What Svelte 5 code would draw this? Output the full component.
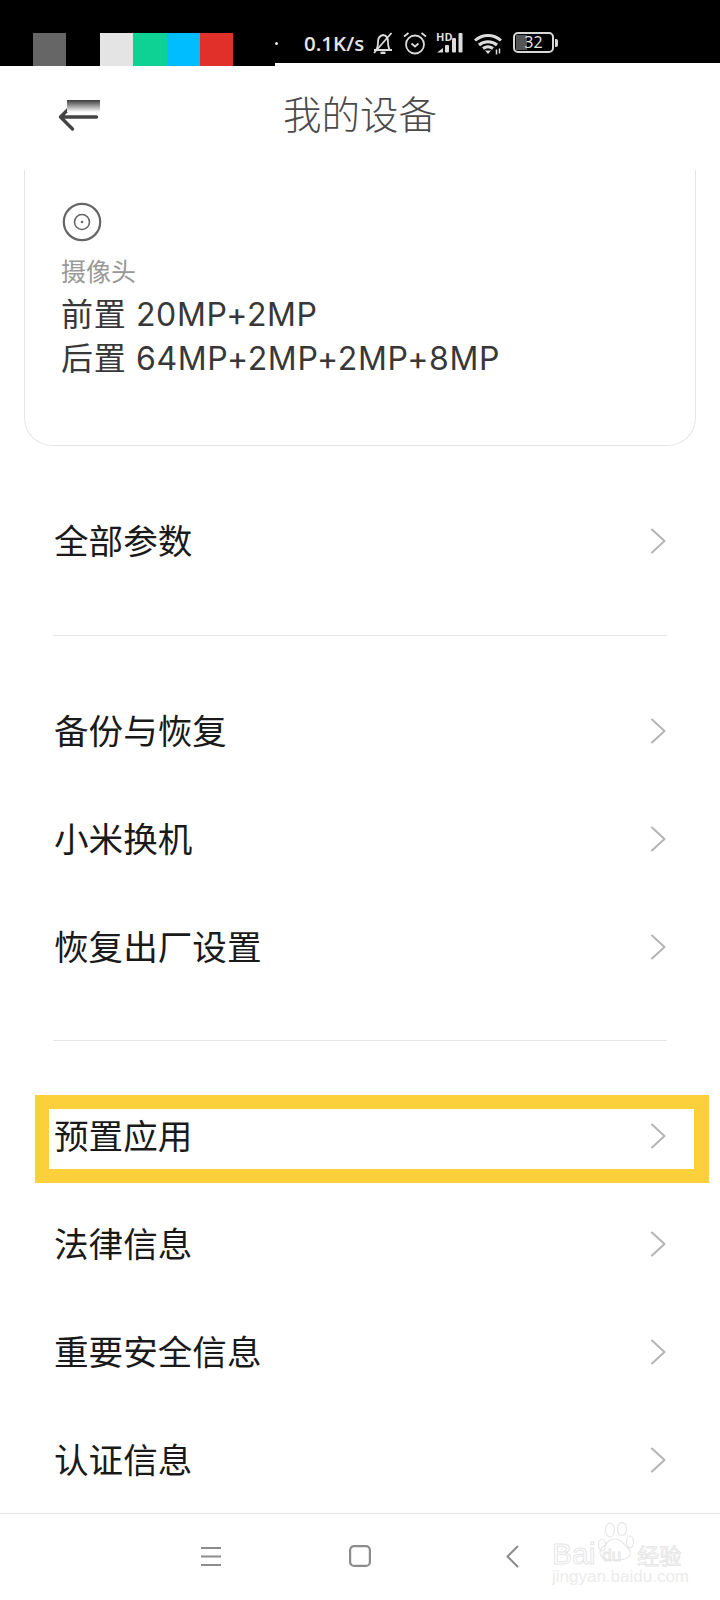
<script>
	const SWATCHES = ['#666666', '#000000', '#e4e4e4', '#0dd293', '#00bdff', '#e1302a'];
	const GROUPS = [
		[{ label: '全部参数' }],
		[{ label: '备份与恢复' }, { label: '小米换机' }, { label: '恢复出厂设置' }],
		[{ label: '预置应用', marked: true }, { label: '法律信息' }, { label: '重要安全信息' }, { label: '认证信息' }]
	];
</script>

<div class="page">
	<!-- Status bar -->
	<div class="status-bar">
		<div class="notif-area">
			{#each SWATCHES as color}
				<span class="swatch" style="background: {color}"></span>
			{/each}
		</div>
		<span class="dot"></span>
		<span class="speed">0.1K/s</span>
		<svg class="st bell" viewBox="0 0 20 22" fill="none" stroke="#dcdcdc" stroke-width="1.800">
			<path d="M1 18h18M3 18c2-2.500 2-5 2-8 0-4 2.200-6.500 5-7 3 .3 5 3 5 7 0 3 0 5.500 2 8"></path>
			<path d="M7.500 20.800h5" stroke-width="2.400"></path>
			<path d="M1 21 18.500 1"></path>
		</svg>
		<svg class="st alarm" viewBox="0 0 24 24" fill="none" stroke="#dcdcdc" stroke-width="1.800">
			<circle cx="12" cy="13.500" r="9"></circle>
			<path d="M8.500 12.500 12 15.500l3.500-3M1 5.500 5.500 2M23 5.500 18.500 2"></path>
		</svg>
		<svg class="st signal" viewBox="0 0 27 21">
			<text x="0" y="8.500" class="hd">HD</text>
			<g fill="#dcdcdc">
				<path d="M1 20.500 7 16v4.500z"></path>
				<rect x="9" y="13" width="4" height="7.500" rx="1"></rect>
				<rect x="16" y="6" width="4" height="14.500" rx="1"></rect>
				<rect x="22.500" y="1" width="4" height="19.500" rx="1"></rect>
			</g>
		</svg>
		<svg class="st wifi" viewBox="0 0 28 22" fill="none" stroke="#dcdcdc" stroke-width="3">
			<path d="M1 7.500c7.500-6.800 18.500-6.800 26 0M5 12c5-4.400 13-4.400 18 0M9 15.500c3-2.200 7-2.200 10 0"></path>
			<path d="M11 17.500h6L14 21z" fill="#dcdcdc" stroke="none"></path>
			<path d="M22.500 16.500v5M25.500 15.500v5" stroke-width="1.500"></path>
		</svg>
		<div class="battery">
			<div class="battery-body">
				<span class="battery-fill"></span>
				<span class="battery-num">32</span>
			</div>
			<span class="battery-tip"></span>
		</div>
	</div>

	<!-- Header -->
	<div class="header">
		<div class="back">
			<svg viewBox="0 0 42 32" fill="none" stroke="#444444" stroke-width="3.400" stroke-linecap="round" stroke-linejoin="round">
				<path d="M2.500 17h36M14.500 5 2.500 17l12 12"></path>
			</svg>
			<span class="back-fade"></span>
		</div>
		<div class="title">我的设备</div>
	</div>

	<!-- Spec card -->
	<div class="card">
		<svg class="camera-icon" viewBox="0 0 40 40" fill="none" stroke="#666666">
			<circle cx="20" cy="20" r="18.200" stroke-width="2.200"></circle>
			<circle cx="20" cy="20" r="7.500" stroke-width="1.600"></circle>
			<circle cx="20" cy="20" r="1.300" fill="#666666" stroke="none"></circle>
		</svg>
		<div class="spec-label">摄像头</div>
		<div class="spec-value">前置 20MP+2MP</div>
		<div class="spec-value">后置 64MP+2MP+2MP+8MP</div>
	</div>

	<!-- Menu groups -->
	{#each GROUPS as group, i}
		{#if i > 0}
			<div class="divider"></div>
		{/if}
		<div class="group">
			{#each group as row}
				<div class="row" class:marked={row.marked}>
					<span class="row-label">{row.label}</span>
					<svg class="chevron" viewBox="0 0 16 26" fill="none" stroke="#b4b4b4" stroke-width="2" stroke-linecap="round" stroke-linejoin="round">
						<path d="M2 1.500 14.500 13 2 24.500"></path>
					</svg>
				</div>
			{/each}
		</div>
	{/each}

	<!-- Navigation bar -->
	<div class="nav">
		<svg class="nav-menu" viewBox="0 0 20 20" fill="none" stroke="#8c8c8c" stroke-width="2">
			<path d="M0 2h20M0 10.500h20M0 19h20"></path>
		</svg>
		<svg class="nav-home" viewBox="0 0 22 22" fill="none" stroke="#8c8c8c" stroke-width="2.200">
			<rect x="1.100" y="1.100" width="19.800" height="19.800" rx="4"></rect>
		</svg>
		<svg class="nav-back" viewBox="0 0 13 23" fill="none" stroke="#8c8c8c" stroke-width="2" stroke-linecap="round" stroke-linejoin="round">
			<path d="M11.500 1.500 1.500 11.500l10 10"></path>
		</svg>
		<div class="watermark">
			<svg class="paw" viewBox="0 0 38 40" fill="none" stroke="#e6e6e6" stroke-width="1.200">
				<ellipse cx="5" cy="23" rx="3.500" ry="6"></ellipse>
				<ellipse cx="13" cy="8" rx="4.500" ry="7"></ellipse>
				<ellipse cx="25" cy="7" rx="4.500" ry="6.500"></ellipse>
				<ellipse cx="33" cy="20" rx="3.500" ry="6"></ellipse>
				<path d="M9 37c-7-2-8-9-2-13 4-3 4-7 11-7s8 5 12 8c5 4 4 10-2 12-6 1.500-13 1.500-19 0z"></path>
			</svg>
			<div class="wm-main"><span>Bai</span><span class="wm-du">du</span><span class="wm-cn">经验</span></div>
			<div class="wm-url">jingyan.baidu.com</div>
		</div>
	</div>
</div>

<style>
	:global(body) {
		background: #ffffff;
	}

	.page {
		width: 720px;
		height: 1600px;
		overflow: hidden;
		font-family: Inter, 'Noto Sans CJK SC', sans-serif;
	}

	/* ── Status bar ── */
	.status-bar {
		height: 63px;
		background: #000000;
		display: flex;
		align-items: flex-start;
		position: relative;
	}

	.notif-area {
		width: 242px;
		height: 33px;
		flex-shrink: 0;
		padding: 33px 0 0 33px;
		background: #000000;
		display: flex;
	}

	.swatch {
		width: 33.4px;
		height: 33px;
	}

	.dot {
		width: 3px;
		height: 3px;
		margin: 42px 0 0 0;
		background: #e8e8e8;
		border-radius: 50%;
	}

	.speed {
		margin: 28px 0 0 26px;
		width: 69px;
		font: 600 20.5px/30px 'Open Sans', sans-serif;
		color: #e4e4e4;
		white-space: nowrap;
	}

	.st {
		flex-shrink: 0;
		overflow: visible;
	}

	.bell {
		width: 20px;
		height: 22px;
		margin-top: 32px;
	}

	.alarm {
		width: 24px;
		height: 24px;
		margin: 31px 0 0 10px;
	}

	.signal {
		width: 27px;
		height: 21px;
		margin: 32px 0 0 9px;
	}

	.hd {
		font: 700 11px 'Open Sans', sans-serif;
		fill: #dcdcdc;
	}

	.wifi {
		width: 28px;
		height: 22px;
		margin: 33px 0 0 11px;
	}

	.battery {
		display: flex;
		align-items: center;
		margin: 32px 0 0 11px;
	}

	.battery-body {
		width: 41px;
		height: 21px;
		box-sizing: border-box;
		border: 2px solid #d8d8d8;
		border-radius: 5px;
		position: relative;
		display: flex;
		align-items: center;
		justify-content: center;
		overflow: hidden;
	}

	.battery-fill {
		position: absolute;
		left: 1px;
		top: 1px;
		bottom: 1px;
		width: 11px;
		background: #555555;
	}

	.battery-num {
		position: relative;
		font: 400 16px/17px 'Open Sans', sans-serif;
		color: #e8e8e8;
	}

	.battery-tip {
		width: 3px;
		height: 8px;
		margin-left: 1px;
		background: #d8d8d8;
		border-radius: 0 2px 2px 0;
	}

	/* ── Header ── */
	.header {
		height: 107px;
		position: relative;
		display: flex;
		align-items: center;
		justify-content: center;
	}

	.title {
		font-size: 38.5px;
		line-height: 50px;
		margin-bottom: 3px;
		color: #4a4a4a;
		font-weight: 300;
	}

	.back {
		position: absolute;
		left: 58px;
		top: 37px;
		width: 42px;
		height: 32px;
	}

	.back svg {
		display: block;
	}

	.back-fade {
		position: absolute;
		left: 9px;
		top: 0;
		width: 33px;
		height: 12px;
		background: linear-gradient(#3a3a3a, #ffffff);
	}

	/* ── Card ── */
	.card {
		height: 276px;
		box-sizing: border-box;
		margin: 0 24px;
		width: 672px;
		padding: 32px 0 0 36px;
		border: 1px solid #e6e6e6;
		border-top: 0;
		border-radius: 0 0 28px 28px;
	}

	.camera-icon {
		display: block;
		width: 40px;
		height: 40px;
		margin: 0 0 13px 1px;
	}

	.spec-label {
		font-size: 25px;
		line-height: 34px;
		color: #999999;
		margin-bottom: 4px;
	}

	.spec-value {
		font-size: 32px;
		line-height: 44px;
		color: #383838;
		white-space: nowrap;
		letter-spacing: 0.65px;
	}

	/* ── Rows ── */
	.group {
		padding: 41px 0 39.5px;
	}

	.divider {
		height: 1px;
		margin: 0 53px;
		background: #e6e6e6;
	}

	.row {
		height: 108px;
		padding: 0 54px;
		display: flex;
		align-items: center;
		justify-content: space-between;
		position: relative;
	}

	.row.marked::after {
		content: '';
		position: absolute;
		left: 35px;
		right: 11px;
		top: 13px;
		bottom: 7px;
		border: solid #fcd03a;
		border-width: 14px 15px 14px 14px;
	}

	.row-label {
		font-size: 34.6px;
		line-height: 48px;
		color: #1a1a1a;
	}

	.chevron {
		width: 16px;
		height: 26px;
	}

	/* ── Nav bar ── */
	.nav {
		border-top: 1px solid #e6e6e6;
		margin-top: -40.5px;
		height: 87px;
		position: relative;
		display: flex;
		align-items: flex-start;
		padding: 31px 0 0 201px;
		background: #ffffff;
	}

	.nav-menu {
		width: 20px;
		height: 20px;
		margin-top: 1px;
	}

	.nav-home {
		width: 22px;
		height: 22px;
		margin-left: 128px;
	}

	.nav-back {
		width: 13px;
		height: 23px;
		margin-left: 135px;
	}

	.watermark {
		position: absolute;
		left: 552px;
		top: 8px;
		width: 130px;
		color: transparent;
	}

	.paw {
		position: absolute;
		left: 45px;
		top: 0;
		width: 38px;
		height: 40px;
	}

	.wm-main {
		position: absolute;
		top: 16px;
		left: 0;
		font: 400 30px/28px 'Liberation Sans', sans-serif;
		-webkit-text-stroke: 1px #e6e6e6;
		white-space: nowrap;
		display: flex;
		align-items: center;
	}

	.wm-du {
		font-size: 17px;
		margin: 4px 16px 0 7px;
	}

	.wm-cn {
		font: 400 22px/28px 'Noto Sans CJK SC', sans-serif;
	}

	.wm-url {
		position: absolute;
		top: 46px;
		left: 0;
		font: 400 17px/18px 'Liberation Sans', sans-serif;
		color: #ececec;
		white-space: nowrap;
	}
</style>
